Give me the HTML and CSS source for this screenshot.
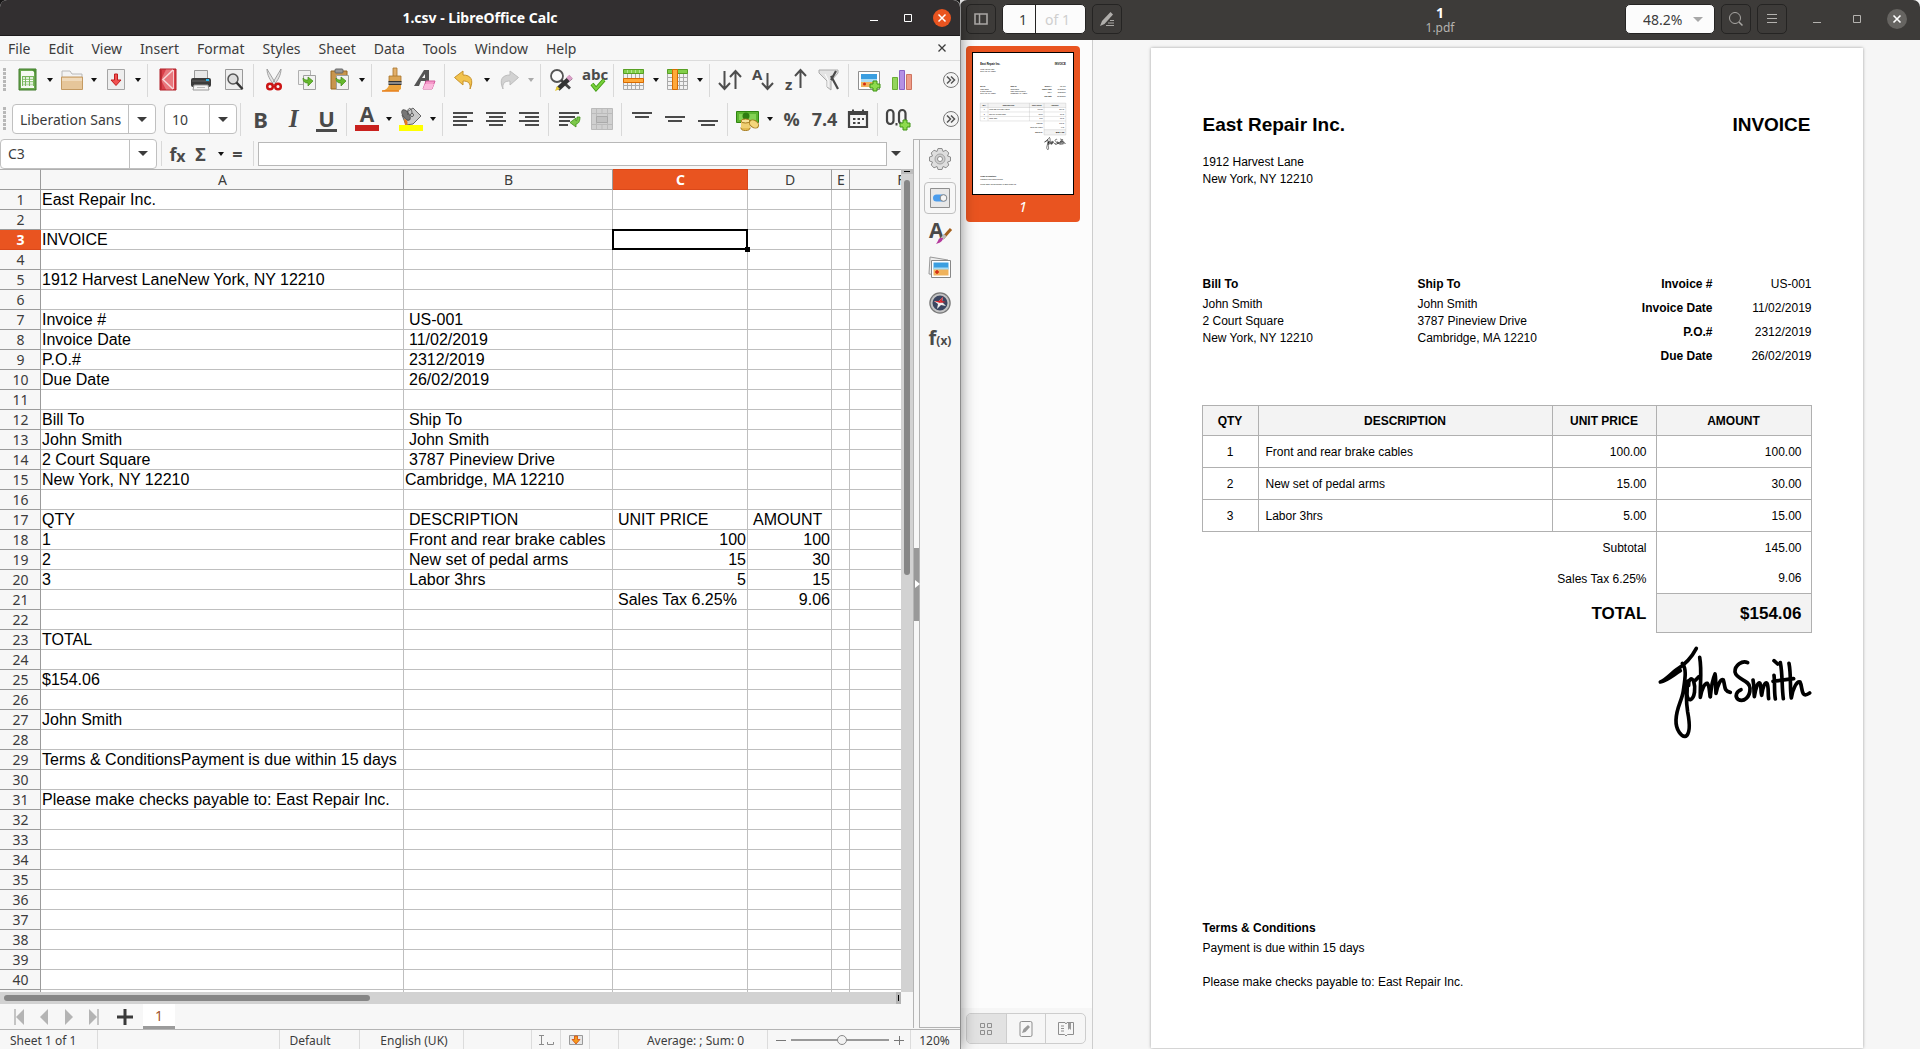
FILE: index.html
```html
<!DOCTYPE html>
<html lang="en">
<head>
<meta charset="utf-8">
<title>1.csv - LibreOffice Calc</title>
<link rel="stylesheet" href="styles.css">
</head>
<body>
<section class="calc" aria-label="Spreadsheet window">
  <header class="titlebar">
    <h1 class="titlebar-text">1.csv - LibreOffice Calc</h1>
    <div class="titlebar-buttons">
      <button class="win-btn" aria-label="Minimise"><svg width="10" height="10"><path d="M1 7.5h8" stroke="#fff"/></svg></button>
      <button class="win-btn" aria-label="Maximise"><svg width="10" height="10"><path d="M1.500 1.500h7v7h-7z" stroke="#fff" fill="none"/></svg></button>
      <button class="win-btn win-close" aria-label="Close"><svg width="10" height="10"><path d="M1.500 1.500l7 7m0-7l-7 7" stroke="#fff" stroke-width="1.500"/></svg></button>
    </div>
  </header>

  <nav class="menubar">
    <button>File</button><button>Edit</button><button>View</button><button>Insert</button><button>Format</button><button>Styles</button><button>Sheet</button><button>Data</button><button>Tools</button><button>Window</button><button>Help</button>
    <button class="doc-close" aria-label="Close document"><svg width="10" height="10"><path d="M1.500 1.500l7 7m0-7l-7 7" stroke="#3c3c3c" stroke-width="1.300"/></svg></button>
  </nav>

  <div class="toolbar" role="toolbar" aria-label="Standard">
    <span class="grip"></span>
    <button class="tool" aria-label="New"><svg viewBox="0 0 24 24"><path d="M3 1h17v21H3z" fill="#6aa84f" stroke="#3e7b2a"/><path d="M5 3h13v17H5z" fill="#f6faf3"/><path d="M15 1l5 5V1z" fill="#4c8f34"/><path d="M6 8h12v10H6z" fill="#79b75e"/><path d="M7 10h10M7 12.500h10M7 15h10M7 17.200h10" stroke="#fff" stroke-width="1.300"/><path d="M9.500 8v10M13.500 8v10" stroke="#79b75e"/></svg></button><button class="arrow" aria-label="New options"></button>
    <button class="tool" aria-label="Open"><svg viewBox="0 0 24 24"><path d="M2 3h8l2 3h10v8H2z" fill="#f3f3f3" stroke="#b9b9b9"/><path d="M1.500 9h21v12.500h-21z" fill="#e6c69a" stroke="#c49a62"/><path d="M2 10h20v3H2z" fill="#f0dabb"/></svg></button><button class="arrow" aria-label="Open options"></button>
    <button class="tool" aria-label="Save"><svg viewBox="0 0 24 24"><path d="M3.500 1.500h17v20h-17z" fill="#eee" stroke="#a5a5a5"/><path d="M10.500 6h3v6h3.500l-5 5.500L7 12h3.500z" fill="#f05050" stroke="#c01c1c"/></svg></button><button class="arrow" aria-label="Save options"></button>
    <span class="sep"></span>
    <button class="tool" aria-label="Export as PDF"><svg viewBox="0 0 24 24"><path d="M4 1h16v21H4z" fill="#d9404a" stroke="#b02029"/><path d="M10 1.500h7v20h-7L5 12z" fill="#e8777d"/><path d="M17 2L7 11.500 17 21" fill="none" stroke="#f7d9da" stroke-width="1.500"/><path d="M5 2v19" stroke="#a81c26"/><path d="M17.500 2v19" stroke="#f5c9cb"/></svg></button>
    <button class="tool" aria-label="Print"><svg viewBox="0 0 24 24"><path d="M5.500 2.500h13V11h-13z" fill="#e8e8e8" stroke="#999"/><rect x="2" y="10" width="20" height="9" rx="2" fill="#3b3b3b"/><path d="M3 13h18" stroke="#666"/><path d="M17 11h3v2h-3z" fill="#28b8f0"/><path d="M5 17h14l1 5H4z" fill="#f4f4f4" stroke="#999"/><path d="M8 19.500h8" stroke="#bbb"/></svg></button>
    <button class="tool" aria-label="Print preview"><svg viewBox="0 0 24 24"><path d="M3.500 1.500h17v20h-17z" fill="#eee" stroke="#999"/><circle cx="11" cy="11" r="5" fill="#dcdcdc" stroke="#555" stroke-width="1.500"/><path d="M14.500 14.500l6 6.500" stroke="#333" stroke-width="2.500"/></svg></button>
    <span class="sep"></span>
    <button class="tool" aria-label="Cut"><svg viewBox="0 0 24 24"><path d="M5 1l9 15-2 1C8 12 5 7 5 1zM19 1l-9 15 2 1c4-5 7-10 7-16z" fill="#e4e4e4" stroke="#8e8e8e" stroke-width=".8"/><circle cx="8" cy="18.500" r="2.800" fill="none" stroke="#cc1414" stroke-width="2.500"/><circle cx="16" cy="18.500" r="2.800" fill="none" stroke="#cc1414" stroke-width="2.500"/></svg></button>
    <button class="tool" aria-label="Copy"><svg viewBox="0 0 24 24"><path d="M3.500 2.500h12v14h-12z" fill="#f2f2f2" stroke="#b0b0b0"/><path d="M8.500 7.500h12v14h-12z" fill="#f2f2f2" stroke="#a0a0a0"/><path d="M8 10c0 4 2 5 5 5v3l5-5-5-4v3c-2 0-3 0-5-2z" fill="#66b92e" stroke="#3f8a14" stroke-width=".7"/></svg></button>
    <button class="tool" aria-label="Paste"><svg viewBox="0 0 24 24"><path d="M3 3h16v18H3z" fill="#c8954d" stroke="#966620"/><rect x="7" y="1" width="8" height="4" rx="1" fill="#999" stroke="#666"/><path d="M8.500 7.500h12v14h-12z" fill="#f2f2f2" stroke="#a0a0a0"/><path d="M8 10c0 4 2 5 5 5v3l5-5-5-4v3c-2 0-3 0-5-2z" fill="#66b92e" stroke="#3f8a14" stroke-width=".7"/></svg></button><button class="arrow" aria-label="Paste options"></button>
    <span class="sep"></span>
    <button class="tool" aria-label="Clone formatting"><svg viewBox="0 0 24 24"><path d="M13 0h4v9h-4z" fill="#e2b06c" stroke="#a8742c" stroke-width=".8"/><path d="M9 8h12v6H9z" fill="#dba556" stroke="#a8742c" stroke-width=".8"/><path d="M8.500 13h13v4h-13z" fill="#333"/><path d="M8.500 15h13" stroke="#ddd"/><path d="M9 17h12v4l-3 2H2c4-1 6-3 7-6z" fill="#eba23a"/><path d="M2 23h17" stroke="#e8801c" stroke-width="1.500"/></svg></button>
    <button class="tool" aria-label="Clear formatting"><svg viewBox="0 0 24 24"><path d="M11 2h5v15h-4v-4H8l-2 5H1zm1 4l-3 4h3z" fill="#555"/><path d="M13 13h9l-3 8h-9z" fill="#f79acb" stroke="#d45a9d"/><path d="M10 21l2-5h9l-2 5z" fill="#fbb8dc"/></svg></button>
    <span class="sep"></span>
    <button class="tool" aria-label="Undo"><svg viewBox="0 0 24 24"><path d="M1.500 9.500L10 3v4c8 0 11 5 7 14 1-6-2-8-7-8v4z" fill="#f2c34e" stroke="#c8922a"/></svg></button><button class="arrow" aria-label="Undo history"></button>
    <button class="tool" aria-label="Redo"><svg viewBox="0 0 24 24"><path d="M21.500 9.500L13 3v4C5 7 2 12 6 21c-1-6 2-8 7-8v4z" fill="#d2d2d2" stroke="#bdbdbd"/></svg></button><button class="arrow arrow-off" aria-label="Redo history"></button>
    <span class="sep"></span>
    <button class="tool" aria-label="Find and replace"><svg viewBox="0 0 24 24"><circle cx="8" cy="8" r="6" fill="#fafafa" stroke="#555" stroke-width="1.800"/><path d="M12 12l9 8.500" stroke="#444" stroke-width="2.800"/><path d="M22 9l-13 12" stroke="#333" stroke-width="4.500"/><path d="M19 11.500l3-3" stroke="#dba0c8" stroke-width="5"/><path d="M6 23l2-5 3 3z" fill="#e4c832"/></svg></button>
    <button class="tool" aria-label="Spelling"><svg viewBox="0 0 24 24"><text x="0" y="12" class="icon-abc">abc</text><path d="M10 16l4 5 8-9" fill="none" stroke="#3f9a10" stroke-width="4"/><path d="M10 16l4 5 8-9" fill="none" stroke="#78d03c" stroke-width="2.200"/></svg></button>
    <span class="sep"></span>
    <button class="tool" aria-label="Row"><svg viewBox="0 0 24 24"><path d="M1.500 1.500h20v20h-20z" fill="#f2f2f2" stroke="#aaa"/><path d="M1.500 17.500h20M5.500 6v16M9.500 6v16M13.500 6v16M17.500 6v16" stroke="#aaa"/><path d="M1.500 1.500h20v4h-20z" fill="#82cf4a" stroke="#58a024"/><path d="M1.500 10.500h20v4h-20z" fill="#ffa93a" stroke="#d86a00"/><path d="M5.500 2v3M9.500 2v3M13.500 2v3M17.500 2v3" stroke="#b4e492"/></svg></button><button class="arrow" aria-label="Row options"></button>
    <button class="tool" aria-label="Column"><svg viewBox="0 0 24 24"><path d="M1.500 1.500h20v20h-20z" fill="#f2f2f2" stroke="#aaa"/><path d="M1.500 9.500h20M1.500 13.500h20M1.500 17.500h20M13.500 6v16M17.500 6v16" stroke="#aaa"/><path d="M1.500 1.500h20v4h-20z" fill="#82cf4a" stroke="#58a024"/><path d="M6.500 1.500h5v20h-5z" fill="#ffa93a" stroke="#d86a00"/></svg></button><button class="arrow" aria-label="Column options"></button>
    <span class="sep"></span>
    <button class="tool" aria-label="Sort"><svg viewBox="0 0 24 24"><path d="M6.500 3v17M1 15l5.500 6 5.500-6M17.500 21V4M12 9l5.500-6L23 9" fill="none" stroke="#4d4d4d" stroke-width="2"/></svg></button>
    <button class="tool" aria-label="Sort ascending"><svg viewBox="0 0 24 24"><path d="M16.500 5v15M11 15l5.500 6 5.500-6" fill="none" stroke="#4d4d4d" stroke-width="2"/><text x="1" y="12" class="icon-letter">A</text></svg></button>
    <button class="tool" aria-label="Sort descending"><svg viewBox="0 0 24 24"><path d="M16.500 20V3M11 8l5.500-6L22 8" fill="none" stroke="#4d4d4d" stroke-width="2"/><text x="1" y="22" class="icon-letter">z</text></svg></button>
    <button class="tool" aria-label="AutoFilter"><svg viewBox="0 0 24 24"><path d="M2 2h19v3l-7 8v9l-4-3v-6L2 5z" fill="#e3e3e3" stroke="#aaa"/><path d="M8 6l3 6v7" stroke="#fff" fill="none"/><path d="M19 3l-5 9M14 8l7 13" stroke="#4a4a4a" stroke-width="2.200"/></svg></button>
    <span class="sep"></span>
    <button class="tool" aria-label="Insert image"><svg viewBox="0 0 24 24"><path d="M1.500 3.500h21v18h-21z" fill="#fff" stroke="#8f8f8f"/><path d="M4 6h16v7H4z" fill="#3a9ee0"/><path d="M4 11h16v3H4z" fill="#a9dcf4"/><path d="M4 14h16v5H4z" fill="#f0b35c"/><circle cx="7.500" cy="16" r="1.500" fill="#d42a12"/><path d="M16 13h4v3h3v4h-3v3h-4v-3h-3v-4h3z" fill="#8edb4e" stroke="#3f9414"/></svg></button>
    <button class="tool" aria-label="Insert chart"><svg viewBox="0 0 24 24"><path d="M2.500 9.500h5v12h-5z" fill="#93d45c" stroke="#6aae32"/><path d="M9.500 2.500h5v19h-5z" fill="#b490e4" stroke="#8b62c4"/><path d="M16.500 6.500h5v15h-5z" fill="#ee9c88" stroke="#ce7460"/></svg></button>
    <button class="more" aria-label="More standard tools"><svg viewBox="0 0 18 18"><circle cx="9" cy="9" r="7.500" fill="#f4f4f4" stroke="#777"/><path d="M5 5.500L8.500 9 5 12.500M9 5.500L12.500 9 9 12.500" fill="none" stroke="#555" stroke-width="1.500"/></svg></button>
  </div>

  <div class="toolbar toolbar-format" role="toolbar" aria-label="Formatting">
    <span class="grip"></span>
    <div class="combo combo-font"><input type="text" value="Liberation Sans" aria-label="Font name"><button aria-label="Font list"><i class="caret"></i></button></div>
    <div class="combo combo-size"><input type="text" value="10" aria-label="Font size"><button aria-label="Size list"><i class="caret"></i></button></div>
    <span class="sep"></span>
    <button class="tool glyph" aria-label="Bold"><b>B</b></button>
    <button class="tool glyph glyph-italic" aria-label="Italic"><b>I</b></button>
    <button class="tool glyph glyph-under" aria-label="Underline"><b>U</b></button>
    <span class="sep"></span>
    <button class="tool" aria-label="Font colour"><svg viewBox="0 0 24 24"><text x="12" y="15" class="icon-big" text-anchor="middle">A</text><path d="M0 18h24v6H0z" fill="#c9211e"/></svg></button><button class="arrow" aria-label="Font colours"></button>
    <button class="tool" aria-label="Background colour"><svg viewBox="0 0 24 24"><path d="M3 8l11-7 8 8-8 8-7 1z" fill="#c9c9c9" stroke="#666"/><ellipse cx="7" cy="8" rx="3" ry="6" transform="rotate(-35 7 8)" fill="#777" stroke="#555"/><path d="M9 8C7 1 13-2 13 7" fill="none" stroke="#555"/><circle cx="13" cy="8" r="1.500" fill="#eee" stroke="#555"/><path d="M5 12c4 1 4 4 3 6H6z" fill="#e67a1c"/><path d="M0 18h24v6H0z" fill="#ff0"/></svg></button><button class="arrow" aria-label="Background colours"></button>
    <span class="sep"></span>
    <button class="tool" aria-label="Align left"><svg viewBox="0 0 24 24"><path d="M2 6h20M2 10h14M2 14h20M2 18h14" stroke="#4a4a4a" stroke-width="2"/></svg></button>
    <button class="tool" aria-label="Centre"><svg viewBox="0 0 24 24"><path d="M2 6h20M5 10h14M2 14h20M5 18h14" stroke="#4a4a4a" stroke-width="2"/></svg></button>
    <button class="tool" aria-label="Align right"><svg viewBox="0 0 24 24"><path d="M2 6h20M8 10h14M2 14h20M8 18h14" stroke="#4a4a4a" stroke-width="2"/></svg></button>
    <span class="sep"></span>
    <button class="tool" aria-label="Wrap text"><svg viewBox="0 0 24 24"><path d="M2 6h20M2 10h16M2 14h11M2 18h9" stroke="#4a4a4a" stroke-width="2"/><path d="M20 10h3c0 5-2 7-4 7v3l-6-4.500 6-4.500v3c1 0 1-2 1-4z" fill="#7cc84a" stroke="#3f8f18" stroke-width=".8"/></svg></button>
    <button class="tool" aria-label="Merge cells"><svg viewBox="0 0 24 24"><path d="M1.500 1.500h21v21h-21z" fill="#d0d0d0" stroke="#bbb"/><path d="M1 6.500h22M6.500 1v22M12 1v6m0 10v6M17.500 1v22M1 17.500h22" stroke="#bbb"/><path d="M6.500 9.500h11v6h-11z" fill="#c2c2c2" stroke="#aaa"/></svg></button>
    <span class="sep"></span>
    <button class="tool" aria-label="Align top"><svg viewBox="0 0 24 24"><path d="M2 6h20M5 10h14" stroke="#4a4a4a" stroke-width="2"/></svg></button>
    <button class="tool" aria-label="Centre vertically"><svg viewBox="0 0 24 24"><path d="M2 10h20M5 14h14" stroke="#4a4a4a" stroke-width="2"/></svg></button>
    <button class="tool" aria-label="Align bottom"><svg viewBox="0 0 24 24"><path d="M2 14h20M5 18h14" stroke="#4a4a4a" stroke-width="2"/></svg></button>
    <span class="sep"></span>
    <button class="tool" aria-label="Currency"><svg viewBox="0 0 24 24"><path d="M.5 4.500h22v11H.5z" fill="#5cb531" stroke="#2f8410"/><path d="M3 7h17v6H3z" fill="#84d254"/><circle cx="10" cy="9" r="3.500" fill="#2f7d12"/><ellipse cx="9.500" cy="21" rx="4.500" ry="2.500" fill="#e4bb52" stroke="#a77c1e"/><path d="M5 14h9v7H5z" fill="#f0cf72"/><ellipse cx="9.500" cy="14" rx="4.500" ry="2" fill="#f8e29a" stroke="#a77c1e"/><ellipse cx="18" cy="17" rx="5" ry="3.500" transform="rotate(35 18 17)" fill="#f4d67c" stroke="#a77c1e"/></svg></button><button class="arrow" aria-label="Currencies"></button>
    <button class="tool glyph glyph-num" aria-label="Percent"><b>%</b></button>
    <button class="tool glyph glyph-num" aria-label="Number"><b>7.4</b></button>
    <button class="tool" aria-label="Date"><svg viewBox="0 0 24 24"><path d="M3 5h18v15H3z" fill="none" stroke="#444" stroke-width="2.200"/><path d="M2 4h20v4H2z" fill="#444"/><path d="M6 2.500h2v3H6zM16 2.500h2v3h-2z" fill="#444"/><path d="M7 12h2.500m2 0H14m2 0h2M7 16h2.500m2 0H14" stroke="#444" stroke-width="2"/></svg></button>
    <span class="sep"></span>
    <button class="tool" aria-label="Add decimal place"><svg viewBox="0 0 24 24"><rect x="1" y="3" width="6.500" height="14" rx="3.200" fill="none" stroke="#444" stroke-width="2.200"/><rect x="13" y="3" width="6.500" height="14" rx="3.200" fill="none" stroke="#444" stroke-width="2.200"/><path d="M9.500 16h2v2.500h-2z" fill="#444"/><path d="M17 13h4v3h3v4h-3v3h-4v-3h-3v-4h3z" fill="#8edb4e" stroke="#3f9414"/></svg></button>
    <button class="more" aria-label="More formatting tools"><svg viewBox="0 0 18 18"><circle cx="9" cy="9" r="7.500" fill="#f4f4f4" stroke="#777"/><path d="M5 5.500L8.500 9 5 12.500M9 5.500L12.500 9 9 12.500" fill="none" stroke="#555" stroke-width="1.500"/></svg></button>
  </div>

  <div class="work">
    <div class="work-main">
      <div class="formula-bar">
        <div class="combo combo-name"><input type="text" value="C3" aria-label="Name box"><button aria-label="Names"><i class="caret"></i></button></div>
        <span class="sep"></span>
        <button class="fn" aria-label="Function wizard">f<small>x</small></button>
        <button class="fn" aria-label="Select function">Σ</button>
        <button class="arrow" aria-label="Functions"></button>
        <button class="fn" aria-label="Formula">=</button>
        <span class="sep"></span>
        <input class="formula-input" type="text" aria-label="Formula input">
        <button class="expand" aria-label="Expand formula bar"><i class="caret"></i></button>
      </div>

      <div class="grid-row">
        <div class="grid-view">
          <table class="sheet">
            <colgroup><col class="c-head"><col class="c-a"><col class="c-b"><col class="c-c"><col class="c-d"><col class="c-e"><col class="c-f"></colgroup>
            <thead><tr><th></th><th>A</th><th>B</th><th class="active">C</th><th>D</th><th>E</th><th>F</th></tr></thead>
            <tbody>
            <tr><th>1<td>East Repair Inc.<td><td><td><td><td>
            <tr><th>2<td><td><td><td><td><td>
            <tr><th class="active">3<td>INVOICE<td><td class="cursor"><td><td><td>
            <tr><th>4<td><td><td><td><td><td>
            <tr><th>5<td>1912 Harvest LaneNew York, NY 12210<td><td><td><td><td>
            <tr><th>6<td><td><td><td><td><td>
            <tr><th>7<td>Invoice #<td class="lead">US-001<td><td><td><td>
            <tr><th>8<td>Invoice Date<td class="lead">11/02/2019<td><td><td><td>
            <tr><th>9<td>P.O.#<td class="lead">2312/2019<td><td><td><td>
            <tr><th>10<td>Due Date<td class="lead">26/02/2019<td><td><td><td>
            <tr><th>11<td><td><td><td><td><td>
            <tr><th>12<td>Bill To<td class="lead">Ship To<td><td><td><td>
            <tr><th>13<td>John Smith<td class="lead">John Smith<td><td><td><td>
            <tr><th>14<td>2 Court Square<td class="lead">3787 Pineview Drive<td><td><td><td>
            <tr><th>15<td>New York, NY 12210<td>Cambridge, MA 12210<td><td><td><td>
            <tr><th>16<td><td><td><td><td><td>
            <tr><th>17<td>QTY<td class="lead">DESCRIPTION<td class="lead">UNIT PRICE<td class="lead">AMOUNT<td><td>
            <tr><th>18<td>1<td class="lead">Front and rear brake cables<td class="num">100<td class="num">100<td><td>
            <tr><th>19<td>2<td class="lead">New set of pedal arms<td class="num">15<td class="num">30<td><td>
            <tr><th>20<td>3<td class="lead">Labor 3hrs<td class="num">5<td class="num">15<td><td>
            <tr><th>21<td><td><td class="lead">Sales Tax 6.25%<td class="num">9.06<td><td>
            <tr><th>22<td><td><td><td><td><td>
            <tr><th>23<td>TOTAL<td><td><td><td><td>
            <tr><th>24<td><td><td><td><td><td>
            <tr><th>25<td>$154.06<td><td><td><td><td>
            <tr><th>26<td><td><td><td><td><td>
            <tr><th>27<td>John Smith<td><td><td><td><td>
            <tr><th>28<td><td><td><td><td><td>
            <tr><th>29<td>Terms &amp; ConditionsPayment is due within 15 days<td><td><td><td><td>
            <tr><th>30<td><td><td><td><td><td>
            <tr><th>31<td>Please make checks payable to: East Repair Inc.<td><td><td><td><td>
            <tr><th>32<td><td><td><td><td><td>
            <tr><th>33<td><td><td><td><td><td>
            <tr><th>34<td><td><td><td><td><td>
            <tr><th>35<td><td><td><td><td><td>
            <tr><th>36<td><td><td><td><td><td>
            <tr><th>37<td><td><td><td><td><td>
            <tr><th>38<td><td><td><td><td><td>
            <tr><th>39<td><td><td><td><td><td>
            <tr><th>40<td><td><td><td><td><td>
            <tr><th><td><td><td><td><td><td>
            </tbody>
          </table>
        </div>
        <div class="vscroll"><span class="vscroll-split"></span><span class="vscroll-thumb"></span></div>
      </div>
      <div class="hscroll"><span class="hscroll-thumb"></span><span class="hscroll-split"></span></div>
      <div class="tabs">
        <button class="tab-nav" aria-label="First sheet"><svg viewBox="0 0 12 18"><path d="M2 1v16" stroke="#b4b4b4" stroke-width="1.500"/><path d="M11 1v16L3 9z" fill="#b4b4b4"/></svg></button>
        <button class="tab-nav" aria-label="Previous sheet"><svg viewBox="0 0 12 18"><path d="M10 1v16L2 9z" fill="#b4b4b4"/></svg></button>
        <button class="tab-nav" aria-label="Next sheet"><svg viewBox="0 0 12 18"><path d="M2 1v16l8-8z" fill="#b4b4b4"/></svg></button>
        <button class="tab-nav" aria-label="Last sheet"><svg viewBox="0 0 12 18"><path d="M10 1v16" stroke="#b4b4b4" stroke-width="1.500"/><path d="M1 1v16l8-8z" fill="#b4b4b4"/></svg></button>
        <button class="tab-add" aria-label="Add sheet"><svg viewBox="0 0 18 18"><path d="M9 1v16M1 9h16" stroke="#3a3a3a" stroke-width="3"/></svg></button>
        <button class="tab">1</button>
      </div>
    </div>
    <div class="splitter"><button aria-label="Hide sidebar"><svg viewBox="0 0 6 8"><path d="M1 0v8l5-4z" fill="#fff"/></svg></button></div>
    <aside class="sidebar">
      <button aria-label="Sidebar settings"><svg viewBox="0 0 24 24"><path d="M10 1.500h4l1 3 3-1.300 2.800 2.800L19.500 9l3 1v4l-3 1 1.300 3-2.800 2.800-3-1.300-1 3h-4l-1-3-3 1.300L3.200 18l1.300-3-3-1v-4l3-1-1.300-3L6 3.200l3 1.300z" fill="#dedede" stroke="#8c8c8c"/><circle cx="12" cy="12" r="5" fill="#cfcfcf" stroke="#a4a4a4"/><circle cx="12" cy="12" r="2.500" fill="#fff" stroke="#8c8c8c"/></svg></button>
      <hr>
      <button class="selected" aria-label="Properties"><svg viewBox="0 0 24 24"><path d="M2.500 2.500h19v19h-19z" fill="#e8e8e8" stroke="#8f8f8f"/><rect x="5" y="8.500" width="14" height="7" rx="3.500" fill="#4a9cec"/><circle cx="15.500" cy="12" r="3.300" fill="#f5f5f5" stroke="#888"/></svg></button>
      <button aria-label="Styles"><svg viewBox="0 0 24 24"><text x="1" y="17" class="icon-big">A</text><path d="M23 8l-8 9" stroke="#a4601c" stroke-width="3"/><path d="M17 14l-3 4" stroke="#bbb" stroke-width="3.500"/><path d="M15 17c0 3-3 5-7 6 2-2 2-5 4-6z" fill="#b43a9c"/></svg></button>
      <button aria-label="Gallery"><svg viewBox="0 0 24 24"><path d="M2 1l18 3-2 16-17-2z" fill="#eee" stroke="#999"/><path d="M3.500 4.500h19v17h-19z" fill="#fff" stroke="#888"/><path d="M5.500 6.500h15v7h-15z" fill="#3a9ee0"/><path d="M5.500 11.500h15v2h-15z" fill="#a9dcf4"/><path d="M5.500 13.500h15v6h-15z" fill="#f0b35c"/><path d="M9 14v4M7 16h4" stroke="#d42a12" stroke-width="1.500"/></svg></button>
      <button aria-label="Navigator"><svg viewBox="0 0 24 24"><circle cx="12" cy="12" r="10" fill="#3b4560" stroke="#777" stroke-width="1.500"/><circle cx="12" cy="12" r="8.500" fill="none" stroke="#c4c4c4" stroke-width="2"/><path d="M15 6l-1 5 4 4-5-1-4 4 1-5-4-3 5 0z" fill="#eee"/><path d="M15 6l-3 6-6-2 5 0z" fill="#d8242c"/><path d="M12 12l6-1-4-1 1-5z" fill="#d8242c"/></svg></button>
      <button class="fx-btn" aria-label="Functions">f<small>(x)</small></button>
    </aside>
  </div>

  <footer class="status">
    <span class="st-sheet">Sheet 1 of 1</span>
    <span class="st-gap"></span>
    <span class="st-style">Default</span>
    <span class="st-lang">English (UK)</span>
    <span class="st-empty"></span>
    <span class="st-icon"><svg width="17" height="12"><path d="M1 1.500h5M3.500 1.500v9M1 10.500h5M9.500 8v2.500h6V8" fill="none" stroke="#8c8c8c"/></svg></span>
    <span class="st-icon"><svg width="14" height="12"><path d="M.5 1.500h13v9H.5z" fill="#e6e6e6" stroke="#999"/><path d="M5.500 2h3v3.500H11L7 10 3 5.500h2.500z" fill="#f59a1c" stroke="#d2460a" stroke-width=".8"/></svg></span>
    <span class="st-icon"></span>
    <span class="st-sum">Average: ; Sum: 0</span>
    <span class="st-zoom"><button aria-label="Zoom out"><svg width="10" height="10"><path d="M0 5.500h10" stroke="#777"/></svg></button><input type="range" min="0" max="100" value="53" aria-label="Zoom"><button aria-label="Zoom in"><svg width="10" height="10"><path d="M0 5.500h10M5.500 1v9" stroke="#777"/></svg></button></span>
    <span class="st-pct">120%</span>
  </footer>
</section>

<section class="viewer" aria-label="Document viewer window">
  <header class="headerbar">
    <div class="hb-side">
      <button class="hb-btn" aria-label="Side pane"><svg viewBox="0 0 16 16"><path d="M2 3h12v10H2z" fill="none" stroke="#a9a7a4" stroke-width="1.600"/><path d="M6.500 3v10" stroke="#a9a7a4" stroke-width="1.500"/></svg></button>
      <div class="page-box"><input type="text" value="1" aria-label="Page"><span>of 1</span></div>
      <button class="hb-btn" aria-label="Annotate"><svg viewBox="0 0 16 16"><path d="M1 15l2-5 8.500-9 2.500 2.500L5.500 13z" fill="#b0aeab"/><path d="M11 9.500h4M9 12h6M7 14.500h8" stroke="#a9a7a4"/></svg></button>
    </div>
    <div class="hb-title"><h2>1</h2><p>1.pdf</p></div>
    <div class="hb-side hb-end">
      <div class="zoom-box"><input type="text" value="48.2%" aria-label="Zoom level"><button aria-label="Zoom levels"><i class="caret"></i></button></div>
      <button class="hb-btn" aria-label="Find"><svg viewBox="0 0 16 16"><circle cx="7" cy="7" r="5.500" fill="none" stroke="#a9a7a4"/><path d="M11 11l3.500 3.500" stroke="#a9a7a4" stroke-width="1.500"/></svg></button>
      <button class="hb-btn" aria-label="Menu"><svg viewBox="0 0 16 16"><path d="M3 3.500h10M3 7.500h10M3 11.500h10" stroke="#b4b2af"/></svg></button>
      <button class="hb-win" aria-label="Minimise"><svg viewBox="0 0 10 10"><path d="M1 8.500h8" stroke="#b4b2af"/></svg></button>
      <button class="hb-win" aria-label="Maximise"><svg viewBox="0 0 10 10"><path d="M1.500 1.500h7v7h-7z" fill="none" stroke="#b4b2af"/></svg></button>
      <button class="hb-win hb-close" aria-label="Close"><svg viewBox="0 0 10 10"><path d="M1.500 1.500l7 7m0-7l-7 7" stroke="#fff" stroke-width="1.600"/></svg></button>
    </div>
  </header>

  <div class="viewer-body">
    <aside class="thumbs">
      <div class="thumb-list">
        <button class="thumb">
          <svg class="thumb-page" viewBox="0 0 712 1004" aria-hidden="true">
            <path d="M0 0h712v1004H0z" fill="#fff"/>
            <g font-size="19" font-weight="bold"><text x="52" y="83">East Repair Inc.</text><text x="660" y="83" text-anchor="end">INVOICE</text></g>
            <g font-size="12"><text x="52" y="119">1912 Harvest Lane</text><text x="52" y="136">New York, NY 12210</text>
            <text x="52" y="260">John Smith</text><text x="52" y="277">2 Court Square</text><text x="52" y="294">New York, NY 12210</text>
            <text x="267" y="260">John Smith</text><text x="267" y="277">3787 Pineview Drive</text><text x="267" y="294">Cambridge, MA 12210</text></g>
            <g font-size="12" font-weight="bold"><text x="52" y="240">Bill To</text><text x="267" y="240">Ship To</text><text x="52" y="883">Terms &amp; Conditions</text></g>
            <g font-size="12" font-weight="bold" text-anchor="end"><text x="561" y="240">Invoice #</text><text x="561" y="264">Invoice Date</text><text x="561" y="288">P.O.#</text><text x="561" y="312">Due Date</text></g>
            <g font-size="12" text-anchor="end"><text x="660" y="240">US-001</text><text x="660" y="264">11/02/2019</text><text x="660" y="288">2312/2019</text><text x="660" y="312">26/02/2019</text></g>
            <path d="M51 357h610v31H51zM506 546h155v38H506z" fill="#f3f3f3"/>
            <path d="M51 357h610v227H506V357M51 357v127h610M51 388h610M51 420h610M51 452h610M107 357v127M402 357v127M506 546h155" fill="none" stroke="#aaa" stroke-width="2"/>
            <g font-size="12" font-weight="bold" text-anchor="middle"><text x="79" y="377">QTY</text><text x="253" y="377">DESCRIPTION</text><text x="454" y="377">UNIT PRICE</text><text x="582" y="377">AMOUNT</text></g>
            <g font-size="12"><text x="76" y="409">1</text><text x="76" y="440">2</text><text x="76" y="472">3</text><text x="115" y="409">Front and rear brake cables</text><text x="115" y="440">New set of pedal arms</text><text x="115" y="472">Labor 3hrs</text></g>
            <g font-size="12" text-anchor="end"><text x="496" y="409">100.00</text><text x="496" y="440">15.00</text><text x="496" y="472">5.00</text><text x="650" y="409">100.00</text><text x="650" y="440">30.00</text><text x="650" y="472">15.00</text><text x="496" y="504">Subtotal</text><text x="496" y="535">Sales Tax 6.25%</text><text x="650" y="504">145.00</text><text x="650" y="535">9.06</text></g>
            <g font-size="17" font-weight="bold" text-anchor="end"><text x="496" y="570">TOTAL</text><text x="650" y="570">$154.06</text></g>
            <svg x="506" y="597" width="155" height="95" viewBox="412 375 465 285"><use href="#signature"/></svg>
            <g font-size="12"><text x="52" y="903">Payment is due within 15 days</text><text x="52" y="938">Please make checks payable to: East Repair Inc.</text></g>
          </svg>
          <em>1</em>
        </button>
      </div>
      <div class="thumb-foot">
        <div class="switcher">
          <button class="on" aria-label="Thumbnails"><svg viewBox="0 0 16 16"><path d="M2.500 2.500h4v4h-4zM9.500 2.500h4v4h-4zM2.500 9.500h4v4h-4zM9.500 9.500h4v4h-4z" fill="none" stroke="#8e8e8e"/></svg></button><button aria-label="Annotations"><svg viewBox="0 0 16 16"><rect x="2" y=".5" width="12" height="15" rx="1.500" fill="none" stroke="#8e8e8e"/><path d="M4 12l1.500-4L10 4l2 2-4.500 5z" fill="#9a9a9a"/></svg></button><button aria-label="Bookmarks"><svg viewBox="0 0 16 16"><path d="M.5 1.500H7L8 3l1-1.500h6.500v12H9.500L8 15l-1.500-1.500h-6z" fill="none" stroke="#8e8e8e"/><path d="M3 5h3M3 7.500h3M3 10h3" stroke="#8e8e8e"/><path d="M10 2h3v7l-1.500-1.500L10 9z" fill="#9a9a9a"/></svg></button>
        </div>
      </div>
    </aside>

    <main class="canvas">
      <article class="page">
        <header class="inv-head"><h2>East Repair Inc.</h2><h2>INVOICE</h2></header>
        <p class="address">1912 Harvest Lane<br>New York, NY 12210</p>
        <div class="inv-info">
          <div class="party"><h3>Bill To</h3><p>John Smith<br>2 Court Square<br>New York, NY 12210</p></div>
          <div class="party"><h3>Ship To</h3><p>John Smith<br>3787 Pineview Drive<br>Cambridge, MA 12210</p></div>
          <dl class="meta"><dt>Invoice #</dt><dd>US-001</dd><dt>Invoice Date</dt><dd>11/02/2019</dd><dt>P.O.#</dt><dd>2312/2019</dd><dt>Due Date</dt><dd>26/02/2019</dd></dl>
        </div>
        <table class="items">
          <colgroup><col class="i-qty"><col><col class="i-price"><col class="i-amount"></colgroup>
          <thead><tr><th>QTY</th><th>DESCRIPTION</th><th>UNIT PRICE</th><th>AMOUNT</th></tr></thead>
          <tbody>
            <tr><td class="mid">1</td><td>Front and rear brake cables</td><td class="right">100.00</td><td class="right">100.00</td></tr>
            <tr><td class="mid">2</td><td>New set of pedal arms</td><td class="right">15.00</td><td class="right">30.00</td></tr>
            <tr><td class="mid">3</td><td>Labor 3hrs</td><td class="right">5.00</td><td class="right">15.00</td></tr>
          </tbody>
          <tfoot>
            <tr><td class="right label" colspan="3">Subtotal</td><td class="right side">145.00</td></tr>
            <tr><td class="right label" colspan="3">Sales Tax 6.25%</td><td class="right side">9.06</td></tr>
            <tr class="total"><td class="right label" colspan="3">TOTAL</td><td class="right">$154.06</td></tr>
          </tfoot>
        </table>
        <svg class="signature" viewBox="412 375 465 285" role="img" aria-label="Signature">
          <g id="signature" fill="none" stroke="#000" stroke-width="11" stroke-linecap="round" stroke-linejoin="round">
            <path d="M530 385C516 412 498 432 472 448C452 462 438 480 422 486C442 482 462 464 482 452"/>
            <path d="M488 430C502 446 496 478 491 512C486 545 470 562 469 600C468 630 486 652 498 649C513 640 509 602 504 576C500 550 498 520 504 484"/>
            <path d="M508 482C498 512 500 540 512 539C526 534 528 502 522 484C516 470 506 478 507 496M522 486L538 470"/>
            <path d="M540 412C547 450 541 490 542 532C546 506 556 488 563 490C571 500 568 518 572 530"/>
            <path d="M572 530C575 500 580 475 586 462C590 480 587 502 589 520C594 494 604 474 611 480C617 498 612 514 632 517"/>
            <path d="M684 428C668 420 645 436 646 456C650 480 690 478 691 504C692 532 672 548 655 538C645 529 650 514 664 509"/>
            <path d="M700 480C704 498 702 512 704 530C708 504 715 484 721 490C726 500 722 512 726 526C729 502 736 484 742 490C748 502 744 520 747 536"/>
            <path d="M763 466C766 490 763 514 767 537M763 422L774 432M782 428C789 462 786 500 791 536M760 484L822 476"/>
            <path d="M808 430C815 466 810 504 815 534C820 504 832 482 841 486C850 502 842 538 870 519"/>
          </g>
        </svg>
        <footer class="terms"><h3>Terms &amp; Conditions</h3><p>Payment is due within 15 days</p><p>Please make checks payable to: East Repair Inc.</p></footer>
      </article>
    </main>
  </div>
</section>
</body>
</html>
```

FILE: styles.css
```css
* { box-sizing: border-box; }
html, body { height: 100%; }
body {
  margin: 0;
  display: flex;
  overflow: hidden;
  background: #1c1b1b;
  color: #3c3c3c;
  font-family: "Noto Sans", "Open Sans", sans-serif;
  font-size: 14px;
}
h1, h2, h3, p, dl, dd { margin: 0; }
button, input { font: inherit; color: inherit; margin: 0; padding: 0; border: 0; background: none; }
button { display: flex; align-items: center; justify-content: center; flex: none; }
svg { display: block; flex: none; }
.caret { border: 5px solid transparent; border-top-color: #3c3c3c; border-bottom: 0; }

/* Spreadsheet window */
.calc {
  flex: 1 1 0;
  min-width: 0;
  display: flex;
  flex-direction: column;
  position: relative;
  z-index: 1;
  background: #f7f7f7;
  border-radius: 7px 7px 0 0;
  box-shadow: 1px 0 0 #8c8c8c, 0 0 16px rgba(0, 0, 0, .5);
}
.titlebar {
  height: 36px;
  flex: none;
  display: grid;
  grid-template-columns: 1fr auto 1fr;
  align-items: center;
  padding: 0 9px;
  background: #322f30;
  border-bottom: 1px solid #1d1b1c;
  border-radius: 7px 7px 0 0;
}
.titlebar-text { grid-column: 2; font-size: 14px; font-weight: bold; color: #fff; }
.titlebar-buttons { display: flex; justify-content: flex-end; gap: 16px; }
.win-btn { width: 18px; height: 18px; }
.win-close { border-radius: 50%; background: #e95420; }

.menubar {
  height: 25px;
  flex: none;
  display: flex;
  align-items: center;
  gap: 18px;
  padding: 0 13px 0 8px;
  border-bottom: 1px solid #dcdcdc;
}
.doc-close { margin-left: auto; }

.toolbar { height: 39px; flex: none; display: flex; align-items: center; padding-bottom: 1px; }
.grip {
  width: 3px;
  height: 24px;
  margin: 0 5px 0 3px;
  background: repeating-linear-gradient(#b8b8b8 0 3px, transparent 3px 4px);
}
.tool { width: 33px; height: 33px; }
.tool svg { width: 24px; height: 24px; overflow: visible; }
.arrow { width: 11px; height: 24px; }
.arrow::after { content: ""; border: 3px solid transparent; border-top: 4px solid #111; border-bottom: 0; }
.arrow-off::after { border-top-color: #aaa; }
.sep { width: 1px; height: 33px; flex: none; margin: 0 3px; background: #d9d9d9; }
.arrow + .sep { margin-left: 4px; }
.more { margin-left: auto; width: 18px; }
.more svg { width: 18px; height: 18px; }
.icon-abc { font: bold 15px "Open Sans", sans-serif; fill: #4a4a4a; }
.icon-letter { font: bold 15px "Open Sans", sans-serif; fill: #4a4a4a; }
.icon-big { font: bold 21px "Open Sans", sans-serif; fill: #4a4a4a; }
.glyph { font-size: 22px; line-height: 24px; color: #4a4a4a; }
.glyph-italic { font-family: "Liberation Serif", serif; font-size: 25px; font-style: italic; }
.glyph-under b { line-height: 22px; border-bottom: 3px solid #4a4a4a; padding: 0 2px; }
.glyph-num { font-family: "Open Sans", sans-serif; font-size: 18px; }

.combo {
  display: flex;
  height: 30px;
  background: #fff;
  border: 1px solid #c0c0c0;
  border-radius: 4px;
}
.combo input { min-width: 0; flex: 1; margin-left: 7px; margin-right: 6px; }
.combo button { width: 27px; border-left: 1px solid #c0c0c0; }
.combo-font { width: 144px; margin-left: 1px; }
.combo-size { width: 73px; margin-left: 8px; }
.combo-name { width: 157px; }

.work { flex: 1; min-height: 0; display: flex; }
.work-main { flex: 1; min-width: 0; display: flex; flex-direction: column; }
.formula-bar { height: 30px; flex: none; display: flex; align-items: center; padding-bottom: 1px; }
.formula-bar .sep { height: 25px; margin: 0 4px; }
.fn { width: 23px; font-weight: bold; font-size: 18px; line-height: 24px; color: #4a4a4a; }
.fn small { font-size: 16px; line-height: 20px; padding-top: 4px; }
.formula-bar .fn + .arrow { margin-left: 3px; }
.formula-input { flex: 1; min-width: 0; height: 24px; background: #fff; border: 1px solid #b8b8b8; }
.expand { width: 26px; padding-right: 8px; }

.grid-row { flex: 1; min-height: 0; display: flex; }
.grid-view { flex: 1; min-width: 0; overflow: hidden; background: #fff; }
.sheet { width: 952px; table-layout: fixed; border-collapse: separate; border-spacing: 0; }
.c-head { width: 41px; }
.c-a { width: 363px; }
.c-b { width: 209px; }
.c-c { width: 135px; }
.c-d { width: 84px; }
.c-e { width: 18px; }
.c-f { width: 102px; }
.sheet th, .sheet td { height: 20px; white-space: nowrap; }
.sheet th { padding: 0 0 0 1px; font-weight: normal; line-height: 19px; background: #f7f7f7; border-right: 1px solid #9b9b9b; border-bottom: 1px solid #9b9b9b; }
.sheet thead th { height: 21px; border-top: 1px solid #b0b0b0; }
.sheet th.active { background: #e95420; border-color: #d9481a; color: #fff; font-weight: bold; }
.sheet td {
  padding: 1px 1px 0;
  border-right: 1px solid #bfbfbf;
  border-bottom: 1px solid #bfbfbf;
  font: 16px/18px "Liberation Sans", Arial, sans-serif;
  color: #000;
}
.sheet td.lead { padding-left: 5px; }
.sheet td.num { text-align: right; }
.sheet td.cursor { position: relative; }
.cursor::before { content: ""; position: absolute; inset: -1px; border: 2px solid #000; }
.cursor::after { content: ""; position: absolute; right: -3px; bottom: -3px; width: 5px; height: 5px; background: #000; }

.vscroll { width: 12px; flex: none; background: #d2d2d2; padding: 0 3px; }
.vscroll-split { display: block; height: 5px; margin: 0 -3px 6px; background: #bdbdbd; border: solid #bdbdbd; border-width: 2px 3px; box-shadow: inset 0 1px 0 #000; }
.vscroll-thumb { display: block; height: 48%; border-radius: 3px; background: #868686; }
.hscroll { height: 12px; flex: none; display: flex; align-items: center; margin-right: 12px; background: #d2d2d2; }
.hscroll-thumb { width: 366px; height: 6px; margin-left: 4px; border-radius: 3px; background: #868686; }
.hscroll-split { width: 5px; height: 12px; margin-left: auto; border: solid #b4b4b4; border-width: 3px 2px; background: #000; }

.tabs { height: 25px; flex: none; display: flex; align-items: center; padding-left: 12px; }
.tab-nav { width: 25px; height: 24px; padding-right: 12px; }
.tab-nav svg { width: 12px; height: 18px; }
.tab-add { width: 31px; padding-right: 6px; }
.tab-add svg { width: 18px; height: 18px; }
.tab { width: 32px; height: 25px; background: #fff; border-bottom: 3px solid #9b9b9b; color: #a0522d; }

.splitter { width: 7px; flex: none; display: flex; align-items: center; margin-bottom: 1px; border: solid #b4b4b4; border-width: 1px 1px 0; }
.splitter button { width: 5px; height: 73px; background: #999; }
.splitter svg { width: 6px; height: 8px; }
.sidebar {
  width: 40px;
  flex: none;
  display: flex;
  flex-direction: column;
  align-items: center;
  gap: 3px;
  margin-bottom: 1px;
  padding-top: 3px;
  border: solid #b4b4b4;
  border-width: 1px 0;
}
.sidebar button { width: 32px; height: 32px; border: 1px solid transparent; border-radius: 4px; }
.sidebar .selected { border-color: #c0c0c0; }
.sidebar svg { width: 24px; height: 24px; overflow: visible; }
.sidebar hr { width: 22px; height: 1px; margin: 0; border: 0; background: #dcdcdc; }
.fx-btn { font-size: 20px; line-height: 24px; font-weight: bold; color: #4a4a4a; }
.fx-btn small { font-size: 12px; padding-top: 6px; }

.status { height: 20px; flex: none; display: flex; border-top: 1px solid #b4b4b4; font-size: 12px; line-height: 19px; }
.status > span { display: flex; align-items: center; justify-content: center; white-space: nowrap; padding-top: 1px; box-shadow: inset -1px 0 0 #dcdcdc; }
.status .st-sheet { width: 98px; padding-left: 10px; justify-content: flex-start; }
.status .st-gap { flex: 1; }
.st-style { width: 80px; padding-right: 20px; }
.st-lang { width: 104px; padding-left: 4px; }
.st-empty { width: 68px; }
.st-icon { width: 29px; }
.st-sum { width: 149px; padding-left: 4px; }
.st-zoom { width: 143px; gap: 5px; }
.st-zoom input { width: 98px; height: 16px; appearance: none; }
.st-zoom input::-webkit-slider-runnable-track { height: 2px; background: #999; }
.st-zoom input::-webkit-slider-thumb { appearance: none; width: 10px; height: 10px; margin-top: -4px; border: 1px solid #888; border-radius: 50%; background: #f2f2f2; }
.status .st-pct { width: 49px; padding-right: 2px; box-shadow: none; }

/* Document viewer window */
.viewer { flex: 1 1 0; min-width: 0; display: flex; flex-direction: column; background: #f6f6f6; }
.headerbar {
  height: 40px;
  flex: none;
  display: grid;
  grid-template-columns: 1fr auto 1fr;
  padding: 0 6px;
  background: #3d3b39;
  color: #fff;
  border-radius: 7px 7px 0 0;
}
.hb-side { display: flex; align-items: center; gap: 6px; padding-bottom: 2px; }
.hb-end { justify-content: flex-end; padding-right: 7px; }
.hb-btn { width: 30px; height: 30px; border: 1px solid #252423; border-radius: 5px; }
.hb-btn svg { width: 16px; height: 16px; }
.page-box, .zoom-box { display: flex; align-items: center; height: 30px; background: #fcfcfc; border: 1px solid #252423; border-radius: 5px; color: #3c3c3c; }
.page-box { width: 84px; }
.page-box input { width: 33px; height: 28px; padding-left: 16px; border-right: 1px solid #252423; }
.page-box span { padding-left: 9px; color: #cfcfcf; }
.zoom-box { width: 90px; padding-left: 17px; }
.zoom-box input { width: 44px; }
.zoom-box button { width: 22px; }
.zoom-box .caret { border-top-color: #a8a8a8; }
.hb-title { text-align: center; font-size: 12px; line-height: 15px; padding-top: 5px; color: #b5b3b0; }
.hb-title h2 { font-size: 14px; line-height: 15px; color: #fff; }
.hb-win { width: 20px; height: 20px; margin-left: 14px; }
.hb-win svg { width: 10px; height: 10px; }
.hb-close { border-radius: 50%; background: #666461; }

.viewer-body { flex: 1; min-height: 0; display: flex; }
.thumbs { width: 133px; flex: none; display: flex; flex-direction: column; background: #fcfcfc; border-right: 1px solid #cdcdcd; }
.thumb-list { flex: 1; padding: 6px; }
.thumb { width: 114px; flex-direction: column; padding: 6px 6px 5px; background: #e95420; border-radius: 4px; color: #fff; }
.thumb em { font-size: 15px; line-height: 22px; }
.thumb-page { width: 102px; height: 143px; border: 1px solid #000; font-family: "Liberation Sans", Arial, sans-serif; }
.thumb-foot { height: 41px; padding: 5px 6px; background: #f6f6f6; }
.switcher { display: flex; width: 120px; height: 31px; border: 1px solid #cdcdcd; border-radius: 5px; overflow: hidden; }
.switcher button { flex: 1; border-left: 1px solid #cdcdcd; }
.switcher button:first-child { border-left: 0; }
.switcher .on { background: #e2e2e2; }
.switcher svg { width: 16px; height: 16px; }

.canvas { flex: 1; min-width: 0; display: flex; justify-content: center; align-items: flex-start; padding-top: 8px; overflow: hidden; }
.page {
  width: 712px;
  min-height: 1000px;
  display: flex;
  flex-direction: column;
  padding: 66px 51px 57px;
  background: #fff;
  box-shadow: 0 0 3px rgba(0, 0, 0, .35);
  color: #000;
  font: 12px/17px "Liberation Sans", Arial, sans-serif;
}
.inv-head { display: flex; justify-content: space-between; margin-bottom: 18px; padding: 0 1px; }
.inv-head h2 { font-size: 19px; line-height: 22px; }
.address { padding-left: 1px; }
.inv-info { display: grid; grid-template-columns: 215px 1fr auto; margin-top: 84px; padding-left: 1px; }
.party { padding-top: 4px; }
.party h3, .terms h3 { font-size: 12px; line-height: 17px; margin-bottom: 3px; }
.meta { display: grid; grid-template-columns: auto 99px; line-height: 24px; text-align: right; }
.meta dt { font-weight: bold; }
.items { width: 610px; margin-top: 37px; table-layout: fixed; border-collapse: collapse; }
.i-qty { width: 56px; }
.i-price { width: 104px; }
.i-amount { width: 155px; }
.items th, .items td { height: 32px; padding: 2px 7px 0; border: 1px solid #b0b0b0; }
.items th { height: 30px; background: #f3f3f3; }
.items .mid { text-align: center; }
.items .right { text-align: right; padding-right: 9px; }
.items tfoot td { height: 31px; }
.items .label { border: 0; }
.items .side { border-top: 0; border-bottom: 0; }
.items .total td { height: 39px; font-size: 17px; font-weight: bold; padding-top: 0; }
.items .total .right:not(.label) { background: #f3f3f3; }
.signature { width: 155px; height: 95px; margin-top: 12px; align-self: flex-end; }
.terms { margin-top: auto; padding-left: 1px; }
.terms p + p { margin-top: 17px; }
```
